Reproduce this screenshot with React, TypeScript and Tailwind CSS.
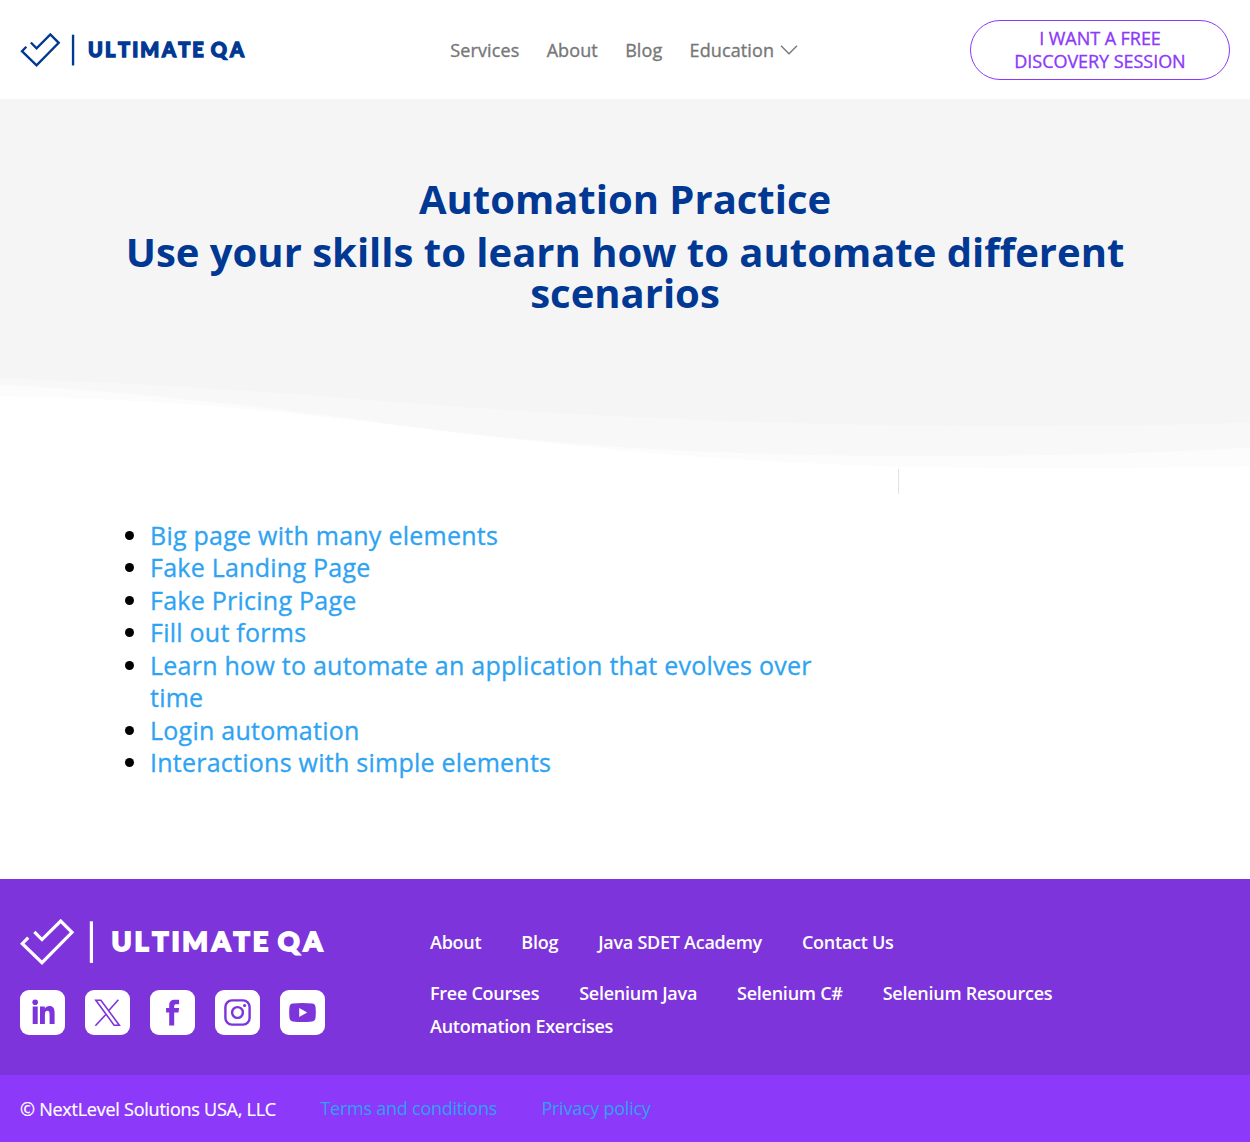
import React from "react";

function Logo({ className }: { className: string }) {
  return (
    <svg viewBox="0 0 305 46" className={className} aria-label="Ultimate QA" role="img">
      <path
        d="M14.3 12.8 22 20.6 40.7 2 52 13.3 22 43.7 2.3 24.6 8.2 18.6"
        fill="none"
        stroke="currentColor"
        strokeWidth="3.2"
      />
      <rect x="69.8" y="2.3" width="3.2" height="41.6" fill="currentColor" />
      <g
        fill="currentColor"
        stroke="currentColor"
        strokeWidth="1.8"
        fontFamily="Lato, sans-serif"
        fontWeight="900"
        fontSize="27"
      >
        <text x="91.6 114.6 132.2 151.4 162.2 191.8 213.6 232.8" y="32.4">ULTIMATE</text>
        <text x="257.8 283.6" y="32.4">QA</text>
      </g>
    </svg>
  );
}

function Header() {
  return (
    <header className="flex h-[99px] items-start justify-between bg-white px-5">
      <Logo className="mt-[33px] h-[34px] w-[226px] text-[#003893]" />
      <nav className="ml-[32.4px] mt-[38px] flex gap-[27.3px] text-[18px] leading-6 tracking-[0.1px] text-[#777] [-webkit-text-stroke:0.35px]">
        <a>Services</a>
        <a>About</a>
        <a>Blog</a>
        <a className="flex items-center">
          Education
          <svg viewBox="0 0 18 10" className="ml-[6px] h-[10px] w-[18px]" fill="none" stroke="currentColor" strokeWidth="1.4">
            <path d="M1 .8 9 8.8 17 .8" />
          </svg>
        </a>
      </nav>
      <a className="mt-5 flex h-[60px] w-[260px] items-center justify-center rounded-full border border-[#8c39fa] px-10 text-center text-[18px] leading-[23px] tracking-[-0.05px] text-[#8c39fa] [-webkit-text-stroke:0.35px]">
        I WANT A FREE
        <br />
        DISCOVERY SESSION
      </a>
    </header>
  );
}

function Hero() {
  return (
    <section className="flex h-[370px] flex-col bg-[#f5f5f5] pt-[79px]">
      <div className="h-[200px] shrink-0 px-[115px] text-center text-[40px] font-bold leading-[41px] text-[#003893]">
        <h1>Automation Practice</h1>
        <h1 className="mt-3">Use your skills to learn how to automate different scenarios</h1>
      </div>
      <svg viewBox="0 378 1250 91" className="block h-[91px] w-full shrink-0" preserveAspectRatio="none">
        <rect y="378" width="1250" height="91" fill="#fff" />
        <path
          d="M0 378V396C150 399 260 408 420 428C540 443 640 453 720 458C820 465 920 468 1030 468C1110 468 1190 467.5 1250 466V378Z"
          fill="#fcfcfc"
        />
        <path
          d="M0 378V384.5C150 393 280 409 420 428C560 445 700 456 930 456C1060 456 1160 453 1250 447.5V378Z"
          fill="#f8f8f8"
        />
        <path
          d="M0 378V378.5C150 383 270 392 420 404C600 417 780 426 1000 426C1090 426 1170 425.5 1250 422.5V378Z"
          fill="#f5f5f5"
        />
      </svg>
    </section>
  );
}

const exercises = [
  "Big page with many elements",
  "Fake Landing Page",
  "Fake Pricing Page",
  "Fill out forms",
  "Learn how to automate an application that evolves over time",
  "Login automation",
  "Interactions with simple elements",
];

function Exercises() {
  return (
    <main className="flex h-[410px] bg-white pl-[125px]">
      <ul className="w-[710px] pt-[49.6px] text-[25px] leading-[32.5px] tracking-[0.25px] text-[#2ea3f2] [-webkit-text-stroke:0.3px]">
        {exercises.map((name) => (
          <li key={name} className="flex">
            <span className="mt-3 mr-4 size-[9px] shrink-0 rounded-full bg-black" />
            <a>{name}</a>
          </li>
        ))}
      </ul>
      <div className="ml-[63px] h-[25px] w-px bg-[#e2e2e2]" />
    </main>
  );
}

function Social({ children }: { children: React.ReactNode }) {
  return (
    <a className="size-[45px] rounded-[9px] bg-white text-[#7d34da]">
      <svg viewBox="0 0 45 45" className="size-[45px]" fill="currentColor">
        {children}
      </svg>
    </a>
  );
}

function Footer() {
  return (
    <footer className="text-white">
      <div className="flex h-[196px] bg-[#7d34da] px-5 pt-10">
        <div className="w-[410px]">
          <Logo className="h-[46px] w-[305px] text-white" />
          <div className="mt-[25px] flex gap-5">
            <Social>
              <circle cx="15.2" cy="12.3" r="2.8" />
              <path d="M12.7 16.5h5V34h-5zM20 16.5h4.8v2.3c.9-1.7 2.5-2.7 4.6-2.7 3.8 0 5.2 2.7 5.2 6.8V34h-5v-9.2c0-2.5-.5-4.1-2.2-4.1-1.8 0-2.5 1.6-2.5 4V34H20z" />
            </Social>
            <Social>
              <path
                d="M10.8 10.2h5.1l18.4 25h-5.2zM33.4 9.8 23.8 20.5M21.1 24.2 10.4 35.8"
                fill="none"
                stroke="currentColor"
                strokeWidth="1.6"
              />
            </Social>
            <Social>
              <path d="M19.2 35.5V22.6h-3.1v-4.5h3.1v-2.8c0-3.8 1.9-5.6 5.7-5.6h4.2v4.5h-2.5c-1.9 0-2.4.6-2.4 2.3v1.6h4.9l-.6 4.5h-4.3v12.9z" />
            </Social>
            <Social>
              <g fill="none" stroke="currentColor" strokeWidth="2.4">
                <rect x="10.4" y="10.4" width="24.2" height="24.2" rx="6.5" />
                <circle cx="22.5" cy="22.5" r="5.4" />
              </g>
              <circle cx="29.6" cy="15.5" r="1.6" />
            </Social>
            <Social>
              <path
                fillRule="evenodd"
                d="M12.8 13.6Q22.5 12.5 32.2 13.6 35.2 14 35.5 17 36.1 22.5 35.5 28 35.2 31 32.2 31.4 22.5 32.4 12.8 31.4 9.8 31 9.5 28 8.9 22.5 9.5 17 9.8 14 12.8 13.6ZM19.2 18V27L27.2 22.5Z"
              />
            </Social>
          </div>
        </div>
        <nav className="pt-[7px] text-[18px] font-semibold leading-[33px] tracking-[-0.26px]">
          <div className="flex gap-10">
            <a>About</a>
            <a>Blog</a>
            <a>Java SDET Academy</a>
            <a>Contact Us</a>
          </div>
          <div className="mt-[18px] flex w-[700px] flex-wrap gap-x-10">
            <a>Free Courses</a>
            <a>Selenium Java</a>
            <a>Selenium C#</a>
            <a>Selenium Resources</a>
            <a>Automation Exercises</a>
          </div>
        </nav>
      </div>
      <div className="flex h-[67px] items-start bg-[#8c39fa] px-5 pt-[21px] text-[18px] leading-6 tracking-[-0.24px]">
        <p className="mt-px w-[300.4px] [-webkit-text-stroke:0.2px]">© NextLevel Solutions USA, LLC</p>
        <a className="w-[221px] text-[#2ea3f2]">Terms and conditions</a>
        <a className="text-[#2ea3f2]">Privacy policy</a>
      </div>
    </footer>
  );
}

export default function App() {
  return (
    <div className="w-full bg-white font-['Open_Sans',sans-serif]">
      <Header />
      <Hero />
      <Exercises />
      <Footer />
    </div>
  );
}
